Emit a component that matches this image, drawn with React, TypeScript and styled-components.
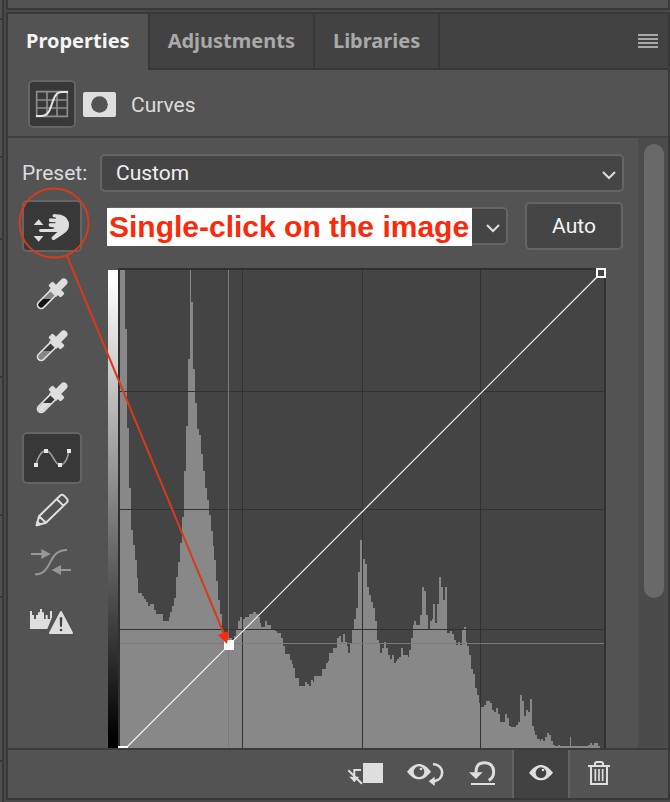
import React from "react";
import styled, { createGlobalStyle } from "styled-components";

const color = {
  panel: "#535353",
  sunken: "#424242",
  field: "#454545",
  pressed: "#383838",
  line: "#383838",
  edge: "#656565",
  icon: "#dedede",
  text: "#dcdcdc",
  muted: "#a9a9a9",
  red: "#d93a1a",
};

const GlobalStyle = createGlobalStyle`
  * { box-sizing: border-box; }
  body { margin: 0; background: #484848; }
  button, select { font: inherit; color: inherit; margin: 0; padding: 0; }
`;

const Workspace = styled.div`
  display: flex;
  height: 100vh;
  font-family: Roboto, "Noto Sans", sans-serif;
  font-size: 21px;
  line-height: 24px;
  color: ${color.text};
  overflow: hidden;
`;

const NeighbourStrip = styled.div`
  flex: none;
  width: 4px;
  border-right: 2px solid ${color.line};
  background: #4f4f4f;
  display: flex;
  flex-direction: column;
`;

const StripCell = styled.div<{ $h: number }>`
  flex: none;
  height: ${(p) => p.$h}px;
  border-bottom: 2px solid ${color.line};
`;

const Dock = styled.div`
  flex: 1;
  min-width: 0;
  margin-left: 2px;
  display: flex;
  flex-direction: column;
  gap: 2px;
  padding-bottom: 2px;
`;

const UpperPanel = styled.div`
  flex: none;
  height: 10px;
  background: ${color.panel};
  border: solid ${color.line};
  border-width: 0 2px 2px;
`;

const Panel = styled.section`
  flex: 1;
  min-height: 0;
  display: flex;
  flex-direction: column;
  background: ${color.panel};
  border: 2px solid ${color.line};
`;

const TabBar = styled.div`
  flex: none;
  height: 56px;
  display: flex;
  background: ${color.sunken};
`;

const Tab = styled.button<{ $active?: boolean }>`
  border: 0 solid ${color.line};
  border-width: ${(p) => (p.$active ? "0 2px 0 0" : "0 2px 2px 0")};
  background: ${(p) => (p.$active ? color.panel : "transparent")};
  color: ${(p) => (p.$active ? "#f4f4f4" : color.muted)};
  font-family: "Noto Sans", sans-serif;
  font-weight: 700;
  font-size: 20px;
  padding: 0 18px ${(p) => (p.$active ? 2 : 0)}px;
`;

const TabFill = styled.div`
  flex: 1;
  display: flex;
  align-items: center;
  justify-content: flex-end;
  padding-right: 10px;
  border-bottom: 2px solid ${color.line};
`;

const MenuButton = styled.button`
  width: 20px;
  height: 14px;
  border: 0;
  background: repeating-linear-gradient(${color.muted} 0 2px, transparent 2px 4px);
`;

const KindBar = styled.div`
  flex: none;
  height: 68px;
  display: flex;
  align-items: center;
  padding: 2px 20px 0;
  border-bottom: 2px solid #414141;
`;

const PlainButton = styled.button`
  display: grid;
  place-items: center;
  border: 0;
  background: none;
`;

const KindButton = styled(PlainButton)`
  width: 48px;
  height: 48px;
  margin-right: 7px;
  border: 2px solid ${color.edge};
  border-radius: 5px;
  background: ${color.pressed};
`;

const KindName = styled.span`
  margin-left: 15px;
  padding-top: 2px;
`;

const ScrollRow = styled.div`
  flex: 1;
  min-height: 0;
  display: flex;
  overflow: hidden;
`;

const Content = styled.div`
  position: relative;
  flex: 1;
  min-width: 0;
  padding: 16px 14px 0 14px;
`;

const ScrollTrack = styled.div`
  flex: none;
  width: 30px;
  padding: 6px 4px 0 6px;
  background: #4b4b4b;
`;

const ScrollThumb = styled.div`
  height: 454px;
  border-radius: 10px;
  background: #696969;
`;

const PresetRow = styled.div`
  display: flex;
  align-items: center;
  height: 38px;
`;

const PresetLabel = styled.label`
  width: 78px;
`;

const SelectBox = styled.div`
  position: relative;
  flex: 1;
  display: flex;
  height: 38px;
`;

const Select = styled.select`
  flex: 1;
  appearance: none;
  border: 2px solid ${color.edge};
  border-radius: 5px;
  background: ${color.field};
  color: #f0f0f0;
  padding: 0 40px 0 14px;
`;

const Chevron = styled.svg`
  position: absolute;
  right: 8px;
  top: 16px;
  width: 14px;
  height: 10px;
  pointer-events: none;
`;

const SampleRow = styled.div`
  display: grid;
  grid-template-columns: 60px 1fr 98px;
  align-items: center;
  margin-top: 8px;
  padding-right: 1px;
`;

const SampleBox = styled(SelectBox)`
  margin: 0 17px 0 25px;
`;

const Note = styled.span`
  position: absolute;
  left: 0;
  top: 1px;
  padding: 0 3px 0 2px;
  background: #fff;
  color: #fa2a0a;
  font: 700 30px/38px "Liberation Sans", sans-serif;
  white-space: nowrap;
`;

const ToolButton = styled(PlainButton)<{ $on?: boolean }>`
  width: 60px;
  height: 52px;
  border: 2px solid ${(p) => (p.$on ? color.edge : "transparent")};
  border-radius: 5px;
  background: ${(p) => (p.$on ? color.pressed : "none")};
`;

const AutoButton = styled.button`
  height: 48px;
  border: 2px solid ${color.edge};
  border-radius: 5px;
  background: ${color.field};
  color: #f4f4f4;
`;

const GraphRow = styled.div`
  display: flex;
  align-items: flex-start;
  margin-top: 16px;
  padding-right: 18px;
`;

const Tools = styled.div`
  flex: none;
  width: 60px;
  margin-right: 26px;
`;

const ToolGroup = styled.div`
  margin-bottom: 8px;
`;

const OutputRamp = styled.div`
  flex: none;
  width: 10px;
  height: 478px;
  margin-top: 2px;
  background: linear-gradient(#fff, #fff 2%, #000 98%);
`;

const Plot = styled.svg`
  flex: 1;
  min-width: 0;
  display: block;
`;

const Callout = styled.svg`
  position: absolute;
  left: 0;
  top: 0;
  width: 260px;
  height: 540px;
  pointer-events: none;
`;

const Footer = styled.footer`
  flex: none;
  height: 50px;
  display: flex;
  justify-content: flex-end;
  padding-right: 40px;
  border-top: 2px solid #3b3b3b;
`;

const FooterButton = styled(PlainButton)<{ $on?: boolean }>`
  width: 58px;
  height: 48px;
  border: 0 solid #636363;
  border-width: ${(p) => (p.$on ? "0 2px" : "0")};
  background: ${(p) => (p.$on ? color.sunken : "none")};
`;

/* Histogram as steps: each pair is the left edge of a bar and its top. */
const histogram: [number, number][] = [
  [120, 270], [125, 329], [127, 428], [129, 488], [131, 530], [133, 545], [135, 560], [137, 578], [138, 593],
  [142, 596], [144, 599], [146, 602], [148, 606], [150, 604], [154, 610], [156, 614], [163, 621], [169, 617],
  [170, 612], [172, 606], [174, 598], [176, 577], [178, 562], [180, 543], [182, 517], [184, 471], [186, 426],
  [188, 359], [190, 270], [191, 302], [193, 369], [195, 403], [197, 429], [199, 435], [201, 454], [203, 471],
  [205, 488], [207, 500], [209, 515], [211, 531], [213, 546], [214, 560], [216, 581], [218, 600], [220, 614],
  [222, 629], [224, 638], [232, 640], [234, 636], [236, 629], [238, 621], [240, 617], [242, 619], [245, 617],
  [249, 614], [253, 612], [256, 614], [258, 617], [260, 623], [261, 627], [265, 621], [267, 625], [271, 629],
  [275, 631], [277, 633], [281, 638], [283, 646], [285, 654], [290, 660], [292, 664], [293, 668], [295, 678],
  [299, 686], [305, 682], [307, 684], [309, 686], [311, 680], [313, 682], [314, 676], [322, 669], [326, 663],
  [328, 661], [329, 653], [333, 648], [337, 638], [339, 636], [341, 642], [343, 634], [345, 642], [347, 646],
  [348, 653], [350, 643], [352, 630], [354, 619], [356, 608], [358, 572], [360, 540], [362, 559], [365, 564],
  [367, 587], [369, 595], [371, 602], [373, 608], [375, 621], [377, 640], [379, 644], [380, 653], [382, 648],
  [384, 642], [386, 648], [388, 655], [390, 659], [392, 655], [394, 663], [396, 661], [397, 659], [399, 657],
  [401, 648], [403, 655], [408, 657], [409, 650], [411, 638], [413, 625], [414, 621], [416, 625], [420, 615],
  [422, 587], [424, 591], [426, 615], [428, 630], [430, 621], [432, 619], [433, 604], [435, 623], [437, 604],
  [439, 577], [441, 587], [443, 600], [445, 587], [447, 633], [450, 631], [452, 634], [454, 640], [456, 645],
  [458, 642], [460, 645], [462, 630], [464, 627], [466, 642], [467, 646], [469, 655], [471, 669], [473, 674],
  [475, 688], [477, 695], [479, 703], [480, 707], [484, 705], [486, 701], [490, 703], [492, 710], [494, 712],
  [496, 708], [498, 714], [500, 722], [505, 714], [507, 718], [509, 726], [511, 727], [516, 725], [518, 722],
  [520, 695], [522, 701], [524, 716], [526, 710], [528, 712], [530, 699], [532, 726], [534, 731], [535, 735],
  [537, 739], [540, 741], [541, 739], [543, 741], [545, 737], [547, 733], [549, 735], [551, 741], [553, 745],
  [555, 746], [558, 745], [560, 746], [570, 737], [571, 746], [588, 745], [590, 743], [592, 745], [594, 743],
  [598, 746], [600, 748],
];

const histogramPath = `M120 748 ${histogram.map(([x, y]) => `H${x} V${y}`).join(" ")} Z`;

function Eyedropper({ id, fluid, glass }: { id: string; fluid: string; glass: string }) {
  return (
    <svg width="40" height="40" viewBox="-60 -60 120 120" aria-hidden="true">
      <clipPath id={id}>
        <rect x="-9" y="-12" width="18" height="67" rx="9" transform="rotate(45)" />
      </clipPath>
      <g clipPath={`url(#${id})`}>
        <rect x="-60" y="-60" width="120" height="75" fill={glass} />
        <rect x="-60" y="15" width="120" height="60" fill={fluid} />
      </g>
      <g transform="rotate(45)" fill={color.icon}>
        <path d="M-11 -12V46A11 11 0 0 0 11 46V-12" fill="none" stroke={color.icon} strokeWidth="5" />
        <path d="M-11 -50a11 11 0 0 1 22 0V-28H22q4 0 4 4V-14q0 4-4 4H15V-2H-15V-10H-22q-4 0-4-4V-24q0-4 4-4H-11z" />
      </g>
    </svg>
  );
}

function Eye({ iris }: { iris: string }) {
  return (
    <>
      <path d="M-36 0C-22 -17 -12 -23 0 -23S22 -17 36 0C22 17 12 23 0 23S-22 17 -36 0Z" fill={color.icon} />
      <circle r="16" fill={iris} />
      <circle cx="6" cy="-8" r="4" fill={color.icon} />
    </>
  );
}

function Arrow() {
  return (
    <Chevron viewBox="0 0 14 10" aria-hidden="true">
      <path d="M1 2L7 8L13 2" fill="none" stroke="#dedede" strokeWidth="2" />
    </Chevron>
  );
}

export default function App() {
  return (
    <>
      <GlobalStyle />
      <Workspace>
        <NeighbourStrip>
          {[20, 138, 82, 138, 138, 82, 164].map((h, i) => (
            <StripCell key={i} $h={h} />
          ))}
        </NeighbourStrip>
        <Dock>
          <UpperPanel />
          <Panel aria-label="Properties">
            <TabBar role="tablist">
              <Tab role="tab" aria-selected="true" $active>Properties</Tab>
              <Tab role="tab" aria-selected="false">Adjustments</Tab>
              <Tab role="tab" aria-selected="false">Libraries</Tab>
              <TabFill>
                <MenuButton aria-label="Panel menu" />
              </TabFill>
            </TabBar>

            <KindBar>
              <KindButton aria-label="Curves adjustment">
                <svg width="34" height="28" viewBox="105 270 102 84" aria-hidden="true">
                  <path d="M110 275H202V349H110ZM141 275V349M171 275V349M110 300H202M110 324H202" fill="none" stroke="#8d8d8d" strokeWidth="5" />
                  <path d="M108 348H124C164 348 148 276 186 276H204" fill="none" stroke="#e4e4e4" strokeWidth="6" />
                </svg>
              </KindButton>
              <PlainButton aria-label="Layer mask">
                <svg width="33" height="25" viewBox="0 0 33 25" aria-hidden="true">
                  <rect width="33" height="25" rx="2" fill={color.icon} />
                  <circle cx="16.5" cy="12.5" r="8.3" fill={color.panel} />
                </svg>
              </PlainButton>
              <KindName>Curves</KindName>
            </KindBar>

            <ScrollRow>
              <Content>
                <PresetRow>
                  <PresetLabel htmlFor="preset">Preset:</PresetLabel>
                  <SelectBox>
                    <Select id="preset" defaultValue="Custom">
                      <option>Custom</option>
                    </Select>
                    <Arrow />
                  </SelectBox>
                </PresetRow>

                <SampleRow>
                  <ToolButton $on aria-label="Adjust on image">
                    <svg width="40" height="40" viewBox="96 198 120 120" fill={color.icon} aria-hidden="true">
                      <path d="M101 255H130L116 238ZM101 288H130L116 305Z" />
                      <path d="M122 267H158L165 263L149 260Q143 256 148 250H166L167 247L149 246Q144 241 149 235L167 236L168 233L159 231Q155 226 161 222L182 224Q207 230 207 256Q207 272 190 282L164 299Q158 301 155 297Q153 293 158 289L172 276H122Q117 276 117 271Q117 267 122 267Z" />
                    </svg>
                  </ToolButton>
                  <SampleBox>
                    <Select aria-label="Channel" />
                    <Arrow />
                    <Note>Single-click on the image</Note>
                  </SampleBox>
                  <AutoButton>Auto</AutoButton>
                </SampleRow>

                <GraphRow>
                  <Tools>
                    <ToolGroup>
                      <ToolButton aria-label="Sample black point">
                        <Eyedropper id="dropBlack" fluid="#111111" glass="#858585" />
                      </ToolButton>
                      <ToolButton aria-label="Sample gray point">
                        <Eyedropper id="dropGray" fluid="#858585" glass="#3a3a3a" />
                      </ToolButton>
                      <ToolButton aria-label="Sample white point">
                        <Eyedropper id="dropWhite" fluid="#dedede" glass="#363636" />
                      </ToolButton>
                    </ToolGroup>
                    <ToolGroup>
                      <ToolButton $on aria-label="Edit points">
                        <svg width="40" height="40" viewBox="96 54 120 120" aria-hidden="true">
                          <path d="M108 135C112 112 125 92 138 92C157 92 163 135 180 135C195 135 204 112 207 92" fill="none" stroke="#9a9a9a" strokeWidth="5" />
                          <path d="M102 129h12v12h-12zM132 87h12v12h-12zM174 129h12v12h-12zM201 87h12v12h-12z" fill="#e6e6e6" />
                        </svg>
                      </ToolButton>
                      <ToolButton aria-label="Draw curve">
                        <svg width="40" height="40" viewBox="96 210 120 120" fill="none" stroke={color.icon} strokeWidth="6" strokeLinejoin="round" aria-hidden="true">
                          <path d="M110 316L117 289L180 227Q186 222 192 227L200 235Q206 242 200 248L138 308ZM170 237L190 257M117 289L138 308" />
                          <path d="M110 316L112 306L120 313Z" fill={color.icon} />
                        </svg>
                      </ToolButton>
                      <ToolButton aria-label="Smooth curve">
                        <svg width="42" height="40" viewBox="93 366 126 120" fill="#979797" aria-hidden="true">
                          <path d="M105 463C160 463 140 390 201 390" fill="none" stroke="#979797" strokeWidth="6" />
                          <path d="M93 399H124V387L152 402L124 417V405H93ZM213 447H183V435L155 450L183 465V453H213Z" />
                        </svg>
                      </ToolButton>
                    </ToolGroup>
                    <ToolButton aria-label="Calculate accurate histogram">
                      <svg width="46" height="40" viewBox="87 546 138 120" fill={color.icon} aria-hidden="true">
                        <path d="M90 573H96V585H102V597H108V585H114V577H120V567H126V577H132V597H137V585H143V597H150V573H156V592L142 627H90Z" />
                        <path d="M183 574L218 641H148Z" stroke={color.panel} strokeWidth="10" strokeLinejoin="round" />
                        <path d="M183 576L216 639H150Z" stroke={color.icon} strokeWidth="6" strokeLinejoin="round" />
                        <path d="M179 592H187L186 620H180Z" fill="#444444" />
                        <circle cx="183" cy="630" r="4" fill="#444444" />
                      </svg>
                    </ToolButton>
                  </Tools>
                  <OutputRamp />
                  <Plot viewBox="118 268 488 480" role="img" aria-label="Histogram and tone curve">
                    <rect x="118" y="268" width="488" height="482" fill="#303030" />
                    <rect x="120" y="270" width="484" height="478" fill="#444444" />
                    <g shapeRendering="crispEdges">
                      <path d={histogramPath} fill="#888888" />
                      <path d="M242 270h1v478h-1zM362 270h1v478h-1zM480 270h1v478h-1zM120 391h484v1h-484zM120 509h484v1h-484zM120 629h484v1h-484z" fill="#323232" />
                      <path d="M228 270h1v478h-1zM120 643h484v1h-484z" fill="#7a7a7a" />
                    </g>
                    <path d="M123 751L601 273" stroke="#f8f8f8" strokeWidth="1.2" />
                    <g shapeRendering="crispEdges">
                      <rect x="597" y="269" width="8" height="8" fill="#444444" stroke="#ffffff" strokeWidth="2" />
                      <rect x="224" y="640" width="10" height="10" fill="#ffffff" />
                      <rect x="118" y="746" width="10" height="2" fill="#ffffff" />
                    </g>
                  </Plot>
                </GraphRow>

                <Callout viewBox="8 138 260 540" aria-hidden="true">
                  <circle cx="54" cy="223" r="34.5" fill="none" stroke={color.red} strokeWidth="2" />
                  <path d="M67 256L224 634" stroke={color.red} strokeWidth="2" />
                  <path d="M227 644L218 635L229 631Z" fill="#fa2a0a" />
                </Callout>
              </Content>
              <ScrollTrack>
                <ScrollThumb />
              </ScrollTrack>
            </ScrollRow>

            <Footer>
              <FooterButton aria-label="Clip to layer">
                <svg width="40" height="28" viewBox="51 60 120 84" aria-hidden="true">
                  <rect x="99" y="69" width="60" height="60" fill={color.icon} />
                  <path d="M93 90H73V114M55 91L96 131" fill="none" stroke={color.icon} strokeWidth="6" />
                  <path d="M58 110H88L73 127Z" fill={color.icon} />
                </svg>
              </FooterButton>
              <FooterButton aria-label="View previous state">
                <svg width="40" height="28" viewBox="225 60 120 84" aria-hidden="true">
                  <g transform="translate(267 95)">
                    <Eye iris={color.panel} />
                  </g>
                  <path d="M309 72C345 76 345 118 312 124" fill="none" stroke={color.icon} strokeWidth="8" />
                  <path d="M296 124L314 110V138Z" fill={color.icon} />
                </svg>
              </FooterButton>
              <FooterButton aria-label="Reset">
                <svg width="40" height="28" viewBox="399 60 120 84" aria-hidden="true">
                  <path d="M438 98C438 74 448 68 463 68C482 68 491 80 491 95C491 108 486 116 476 121" fill="none" stroke={color.icon} strokeWidth="9" />
                  <path d="M417 97H458L438 117ZM423 129H495V135H423Z" fill={color.icon} />
                </svg>
              </FooterButton>
              <FooterButton $on aria-label="Toggle visibility">
                <svg width="40" height="28" viewBox="573 60 120 84" aria-hidden="true">
                  <g transform="translate(633 98)">
                    <Eye iris={color.sunken} />
                  </g>
                </svg>
              </FooterButton>
              <FooterButton aria-label="Delete">
                <svg width="40" height="28" viewBox="747 60 120 84" fill="none" stroke={color.icon} strokeWidth="6" aria-hidden="true">
                  <path d="M774 78H840M795 76V72Q795 66 801 66H813Q819 66 819 72V76M783 78V132H831V78" />
                  <path d="M796 87V123M807 87V123M818 87V123" strokeWidth="5" />
                </svg>
              </FooterButton>
            </Footer>
          </Panel>
        </Dock>
      </Workspace>
    </>
  );
}
